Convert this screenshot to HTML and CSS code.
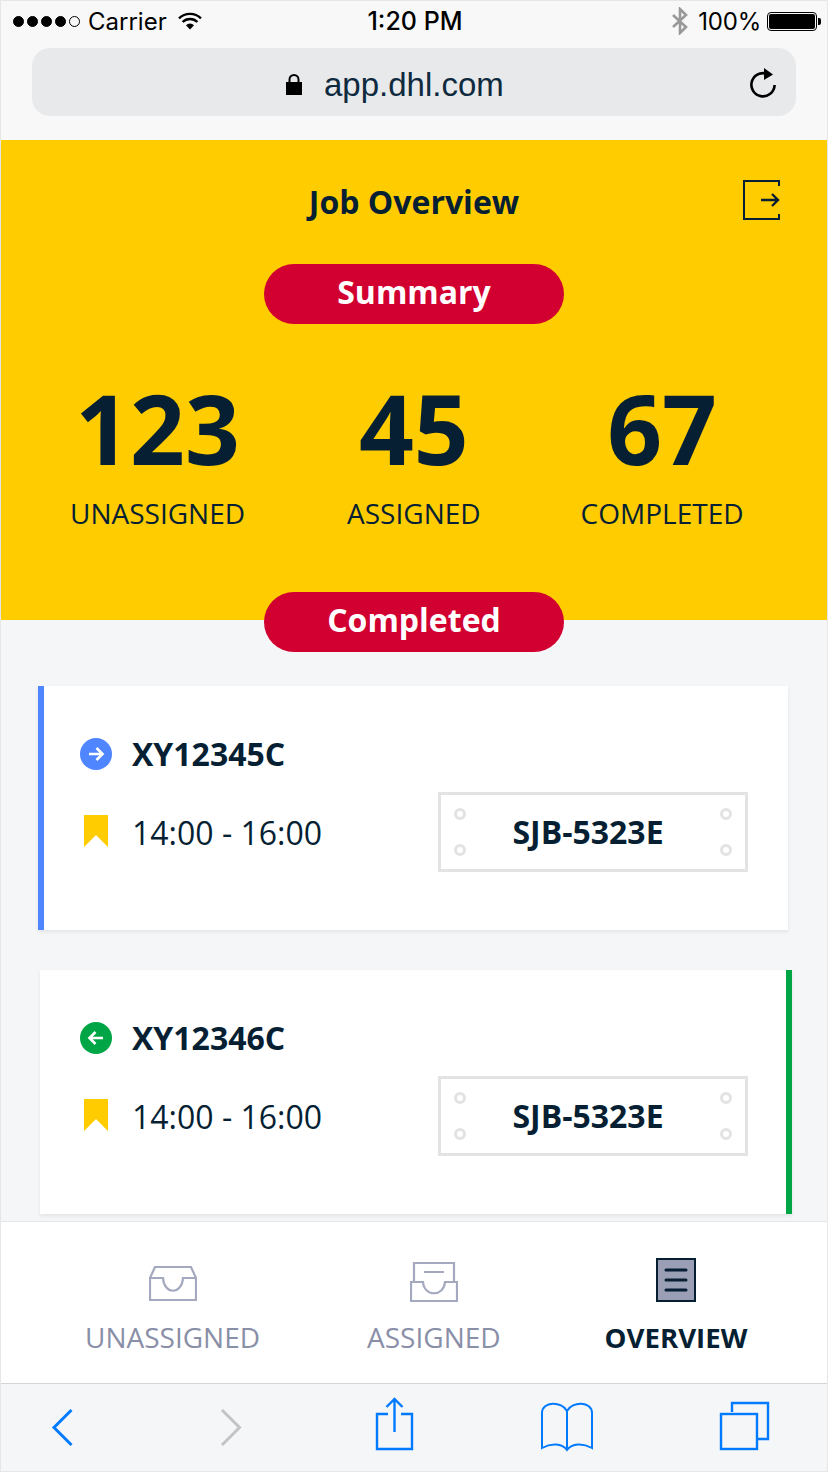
FILE: index.html
```html
<!DOCTYPE html>
<html lang="en">
<head>
  <meta charset="UTF-8">
  <meta name="viewport" content="width=device-width, initial-scale=1.0">
  <title>Job Overview</title>
  <link rel="stylesheet" href="styles.css">
</head>
<body>
  <div class="page">
    <div class="browser-top">
      <div class="status">
        <div class="status-left">
          <span class="signal"><i></i><i></i><i></i><i></i><i class="off"></i></span>
          <span class="carrier">Carrier</span>
          <svg class="wifi" width="24" height="18" viewBox="0 0 24 18"><path d="M1 6.4A15.6 15.6 0 0 1 23 6.4" fill="none" stroke="#000" stroke-width="2.4"/><path d="M4.6 10A10.5 10.5 0 0 1 19.4 10" fill="none" stroke="#000" stroke-width="2.4"/><path d="M8 13.2a5.6 5.6 0 0 1 8 0L12 17.6z" fill="#000"/></svg>
        </div>
        <div class="status-time">1:20 PM</div>
        <div class="status-right">
          <svg class="bt" width="16" height="28" viewBox="0 0 16 28"><path d="M1 8l13 12-6 6V2l6 6L1 20" fill="none" stroke="#999" stroke-width="2.6"/></svg>
          <span class="battery-text">100%</span>
          <span class="battery"><span class="battery-fill"></span></span>
        </div>
      </div>
      <div class="address">
        <svg class="lock" width="16" height="21" viewBox="0 0 16 21"><rect x="0" y="8" width="16" height="13" fill="#000"/><path d="M3.5 9V5.5a4.5 4.5 0 0 1 9 0V9" fill="none" stroke="#000" stroke-width="2"/></svg>
        <span class="url">app.dhl.com</span>
        <svg class="reload" width="28" height="30" viewBox="0 0 28 30"><path d="M20 6.8A11.6 11.6 0 1 0 25.6 17" fill="none" stroke="#000" stroke-width="2.6"/><path d="M15 0l9 6.6-9 5.4z" fill="#000"/></svg>
      </div>
    </div>

    <header class="summary">
      <div class="summary-head">
        <span></span>
        <h1>Job Overview</h1>
        <svg class="logout" width="37" height="40" viewBox="0 0 37 40"><path d="M36 6V1H1V39H36V34" fill="none" stroke="#061f33" stroke-width="2"/><path d="M18 20h17M29 14l6 6-6 6" fill="none" stroke="#061f33" stroke-width="2.400"/></svg>
      </div>
      <div class="pill">Summary</div>
      <div class="stats">
        <div class="stat stat-a"><b>123</b><span>UNASSIGNED</span></div>
        <div class="stat stat-b"><b>45</b><span>ASSIGNED</span></div>
        <div class="stat stat-c"><b>67</b><span>COMPLETED</span></div>
      </div>
    </header>

    <main class="jobs">
      <div class="pill pill-over">Completed</div>

      <article class="card card-in">
        <div class="card-title">
          <svg width="32" height="32" viewBox="0 0 32 32"><circle cx="16" cy="16" r="16" fill="#4f86ff"/><path d="M9 16h13M16.500 10l6 6-6 6" fill="none" stroke="#fff" stroke-width="2.600"/></svg>
          <span>XY12345C</span>
        </div>
        <div class="card-row">
          <div class="slot">
            <svg class="mark" width="24" height="32" viewBox="0 0 24 32"><path d="M0 0h24v32L12 20 0 32z" fill="#ffcc00"/></svg>
            <span>14:00 - 16:00</span>
          </div>
          <div class="plate"><i class="tl"></i><i class="tr"></i><i class="bl"></i><i class="br"></i>SJB-5323E</div>
        </div>
      </article>

      <article class="card card-out">
        <div class="card-title">
          <svg width="32" height="32" viewBox="0 0 32 32"><circle cx="16" cy="16" r="16" fill="#00a646"/><path d="M23 16H10M15.500 10l-6 6 6 6" fill="none" stroke="#fff" stroke-width="2.600"/></svg>
          <span>XY12346C</span>
        </div>
        <div class="card-row">
          <div class="slot">
            <svg class="mark" width="24" height="32" viewBox="0 0 24 32"><path d="M0 0h24v32L12 20 0 32z" fill="#ffcc00"/></svg>
            <span>14:00 - 16:00</span>
          </div>
          <div class="plate"><i class="tl"></i><i class="tr"></i><i class="bl"></i><i class="br"></i>SJB-5323E</div>
        </div>
      </article>
    </main>

    <nav class="tabs">
      <div class="tab tab-a">
        <svg width="48" height="44" viewBox="0 0 48 44"><path d="M1 20V42H47V20L42 9H6zM1 20H14C15 37 33 37 34 20H47" fill="none" stroke="#a5a9c0" stroke-width="2.200"/></svg>
        <span>UNASSIGNED</span>
      </div>
      <div class="tab tab-b">
        <svg width="48" height="44" viewBox="0 0 48 44"><path d="M1 24V43H47V24H35C34 39 14 39 13 24H1zM4 24V5H44V24M14 14H34" fill="none" stroke="#a5a9c0" stroke-width="2.200"/></svg>
        <span>ASSIGNED</span>
      </div>
      <div class="tab tab-c">
        <svg width="40" height="44" viewBox="0 0 40 44"><rect x="1" y="1" width="38" height="42" fill="#9a9fb5" stroke="#061f33" stroke-width="2"/><path d="M10 12H30M10 22H30M10 32H30" stroke="#061f33" stroke-width="3" stroke-linecap="round"/></svg>
        <span>OVERVIEW</span>
      </div>
    </nav>

    <div class="browser-bottom">
      <svg width="60" height="56" viewBox="0 0 60 56"><path d="M39.500 13L22 30.500 39.500 48" fill="none" stroke="#007aff" stroke-width="3"/></svg>
      <svg width="60" height="56" viewBox="0 0 60 56"><path d="M21 13L38.500 30.500 21 48" fill="none" stroke="#c4c4c4" stroke-width="3"/></svg>
      <svg width="60" height="56" viewBox="0 0 60 56"><path d="M23 17H12V52H47V17H36M29.500 35V2M21.500 10L29.500 2 37.500 10" fill="none" stroke="#007aff" stroke-width="2.400"/></svg>
      <svg width="60" height="56" viewBox="0 0 60 56"><path d="M30 14C25 4 5 4 5 16V51C14 46 25 46 30 53 35 46 46 46 55 51V16C55 4 35 4 30 14zV53" fill="none" stroke="#007aff" stroke-width="2"/></svg>
      <svg width="60" height="56" viewBox="0 0 60 56"><path d="M18 15V6H54V42H44" fill="none" stroke="#007aff" stroke-width="2.400"/><rect x="7" y="17" width="36" height="35" fill="none" stroke="#007aff" stroke-width="2.400"/></svg>
    </div>
  </div>
</body>
</html>
```

FILE: styles.css
```css
:root {
  --yellow: #ffcc00;
  --red: #d20030;
  --dark: #061f33;
  --muted: #8a8fa8;
  --page-bg: #f5f6f8;
  --font-app: 'Open Sans', 'Noto Sans', sans-serif;
  --font-ios: Inter, 'Liberation Sans', sans-serif;
}
* { box-sizing: border-box; margin: 0; padding: 0; }
body {
  width: 828px;
  height: 1472px;
  overflow: hidden;
  font-family: var(--font-app);
  color: var(--dark);
}
.page {
  height: 1472px;
  display: flex;
  flex-direction: column;
  border: 1px solid #e6e6e6;
  background: var(--page-bg);
}

/* safari chrome, top */
.browser-top {
  flex: none;
  height: 139px;
  background: #f8f8f8;
  font-family: var(--font-ios);
}
.status {
  height: 39px;
  display: flex;
  align-items: center;
  justify-content: space-between;
  padding: 1px 10px 0 12px;
  font-size: 24px;
  color: #000;
}
.status-left, .status-right {
  width: 300px;
  display: flex;
  align-items: center;
}
.status-right { justify-content: flex-end; }
.signal { display: flex; gap: 3px; margin-right: 8px; }
.signal i {
  width: 11px;
  height: 11px;
  border-radius: 50%;
  background: #000;
  border: 1px solid #000;
}
.signal i.off { background: none; }
.wifi { margin-left: 11px; }
.status-time { font-weight: 500; font-size: 25px; }
.bt { margin-right: 10px; }
.battery-text { font-size: 24px; letter-spacing: -0.2px; }
.battery {
  width: 50px;
  height: 19px;
  margin-left: 6px;
  position: relative;
  border: 1px solid #000;
  border-radius: 4px;
  padding: 1px;
}
.battery::after {
  content: '';
  position: absolute;
  right: -5px;
  top: 5px;
  width: 3px;
  height: 7px;
  background: #000;
  border-radius: 0 2px 2px 0;
}
.battery-fill {
  display: block;
  height: 100%;
  background: #000;
  border-radius: 2px;
}
.address {
  height: 68px;
  margin: 8px 31px 0;
  border-radius: 18px;
  background: #e8e9eb;
  display: flex;
  align-items: center;
  padding-left: 254px;
  position: relative;
}
.lock { margin-right: 22px; margin-top: 4px; }
.url {
  font-family: 'Liberation Sans', sans-serif;
  font-size: 33px;
  color: #0f2a3e;
  padding-top: 6px;
}
.reload { position: absolute; right: 19px; top: 20px; }

/* yellow summary block */
.summary {
  flex: none;
  height: 480px;
  background: var(--yellow);
  padding-top: 40px;
}
.summary-head {
  display: grid;
  grid-template-columns: 1fr auto 1fr;
  align-items: center;
  height: 46px;
  margin-bottom: 38px;
}
.summary-head h1 {
  font-size: 32px;
  font-weight: 700;
  line-height: 44px;
  margin-bottom: 2px;
}
.logout { justify-self: end; margin: 0 47px 6px 0; }
.pill {
  width: 300px;
  height: 60px;
  margin: 0 auto;
  border-radius: 30px;
  background: var(--red);
  color: #fff;
  font-size: 32px;
  font-weight: 700;
  line-height: 56px;
  text-align: center;
}
.stats {
  display: flex;
  padding: 54px 0 0 69px;
}
.stat {
  display: flex;
  flex-direction: column;
  align-items: center;
}
.stat-b { margin-left: 102px; }
.stat-c { margin-left: 100px; }
.stat b {
  font-size: 96px;
  line-height: 100px;
  font-weight: 700;
}
.stat span {
  font-size: 28px;
  line-height: 38px;
  margin-top: 16px;
}

/* job cards */
.jobs {
  flex: 1;
}
.pill-over {
  position: relative;
  margin-top: -28px;
  margin-bottom: 34px;
}
.card {
  height: 244px;
  background: #fff;
  box-shadow: 0 2px 4px rgba(0, 0, 0, 0.08);
  padding-top: 52px;
}
.card-in {
  width: 750px;
  margin-left: 37px;
  margin-bottom: 40px;
  border-left: 6px solid #4f86ff;
  padding-left: 36px;
}
.card-out {
  width: 752px;
  margin-left: 39px;
  border-right: 6px solid #00a646;
  padding-left: 40px;
}
.card-title {
  display: flex;
  align-items: center;
  gap: 20px;
  height: 32px;
  font-size: 32px;
  font-weight: 700;
}
.card-title span { margin-bottom: 2px; }
.card-row {
  display: flex;
  justify-content: space-between;
  margin-top: 22px;
  width: 668px;
}
.slot {
  display: flex;
  align-items: center;
  font-size: 32px;
}
.mark { margin: 0 24px 2px 4px; }
.plate {
  position: relative;
  width: 310px;
  height: 80px;
  border: 3px solid #e3e3e3;
  padding-right: 10px;
  text-align: center;
  font-size: 32px;
  font-weight: 700;
  line-height: 74px;
}
.plate i {
  position: absolute;
  width: 12px;
  height: 12px;
  border: 3px solid #e3e3e3;
  border-radius: 50%;
}
.plate .tl { left: 13px; top: 13px; }
.plate .tr { right: 13px; top: 13px; }
.plate .bl { left: 13px; bottom: 13px; }
.plate .br { right: 13px; bottom: 13px; }

/* app tabs */
.tabs {
  flex: none;
  height: 163px;
  background: #fff;
  border-top: 1px solid #e6e6e6;
  border-bottom: 1px solid #d4d4d4;
  display: flex;
  padding: 36px 0 0 84px;
}
.tab {
  display: flex;
  flex-direction: column;
  align-items: center;
  font-size: 28px;
  line-height: 38px;
  color: var(--muted);
}
.tab span { margin-top: 16px; }
.tab-b { margin-left: 107px; }
.tab-c {
  margin-left: 104px;
  color: var(--dark);
  font-weight: 700;
  font-size: 27.6px;
}

/* safari chrome, bottom */
.browser-bottom {
  flex: none;
  height: 87px;
  display: grid;
  grid-template-columns: 169px 164px 172px 177px 60px;
  padding: 13px 0 0 31px;
  align-items: start;
}
```
